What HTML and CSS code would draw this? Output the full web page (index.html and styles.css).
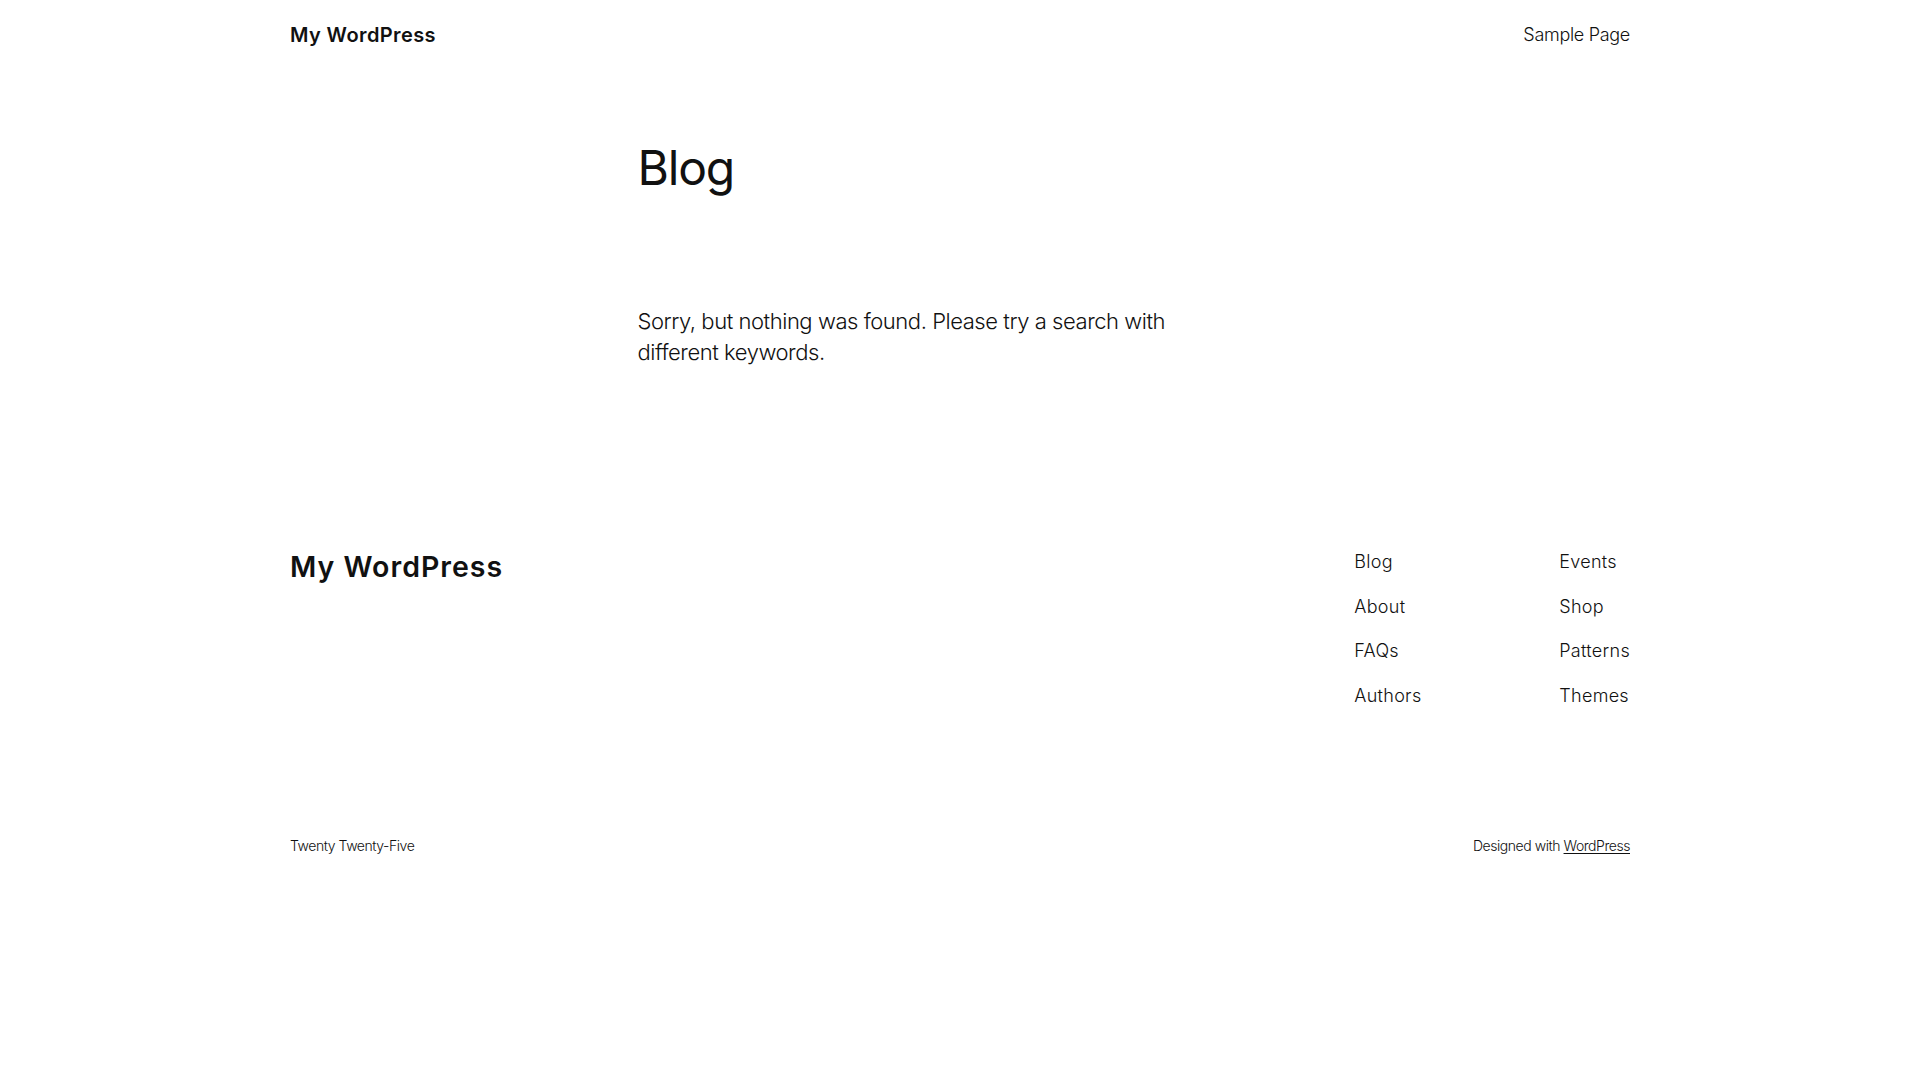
FILE: index.html
```html
<!DOCTYPE html>
<html lang="en">
<head>
<meta charset="utf-8">
<title>Blog – My WordPress</title>
<link rel="stylesheet" href="styles.css">
</head>
<body>
<div class="site">
  <header class="site-header wide">
    <a class="site-title" href="#">My WordPress</a>
    <nav class="header-nav"><a href="#">Sample Page</a></nav>
  </header>

  <main class="content">
    <h1 class="page-title">Blog</h1>
    <p class="not-found">Sorry, but nothing was found. Please try a search with different keywords.</p>
  </main>

  <footer class="site-footer wide">
    <div class="footer-top">
      <a class="footer-title" href="#">My WordPress</a>
      <div class="footer-navs">
        <ul class="footer-nav">
          <li><a href="#">Blog</a></li>
          <li><a href="#">About</a></li>
          <li><a href="#">FAQs</a></li>
          <li><a href="#">Authors</a></li>
        </ul>
        <ul class="footer-nav">
          <li><a href="#">Events</a></li>
          <li><a href="#">Shop</a></li>
          <li><a href="#">Patterns</a></li>
          <li><a href="#">Themes</a></li>
        </ul>
      </div>
    </div>
    <div class="footer-bottom">
      <span>Twenty Twenty-Five</span>
      <span>Designed with <a class="credit" href="#">WordPress</a></span>
    </div>
  </footer>
</div>
</body>
</html>
```

FILE: styles.css
```css
html, body {
  margin: 0;
  padding: 0;
  background: #ffffff;
}

body {
  font-family: Inter, "Liberation Sans", sans-serif;
  font-weight: 300;
  color: #111111;
  letter-spacing: -0.1px;
}

a {
  color: inherit;
  text-decoration: none;
}

.wide {
  width: 1340px;
  margin: 0 auto;
}

.site-header {
  display: flex;
  justify-content: space-between;
  align-items: center;
  padding-top: 21px;
  height: 28px;
}

.site-title {
  font-size: 20px;
  line-height: 28px;
  font-weight: 600;
  letter-spacing: 0.4px;
}

.header-nav a {
  font-size: 18px;
  line-height: 28px;
  letter-spacing: -0.3px;
}

.content {
  width: 645px;
  margin: 0 auto;
}

.page-title {
  margin: 92px 0 0;
  font-size: 48px;
  line-height: 54px;
  font-weight: 400;
  letter-spacing: -1.2px;
}

.not-found {
  margin: 111px 0 0;
  max-width: 580px;
  font-size: 22px;
  line-height: 30.8px;
  letter-spacing: -0.45px;
}

.site-footer {
  margin-top: 182px;
}

.footer-top {
  display: flex;
  justify-content: space-between;
  align-items: flex-start;
}

.footer-title {
  font-size: 28.5px;
  line-height: 34px;
  font-weight: 600;
  letter-spacing: 1px;
}

.footer-navs {
  display: flex;
  margin-top: -0.5px;
}

.footer-nav {
  list-style: none;
  margin: 0;
  padding: 0;
  display: flex;
  flex-direction: column;
  gap: 19.5px;
  width: 205px;
}

.footer-nav:last-child {
  width: auto;
}

.footer-nav li {
  font-size: 18px;
  line-height: 25px;
  letter-spacing: 0.3px;
}

.footer-bottom {
  display: flex;
  justify-content: space-between;
  margin-top: 128px;
  font-size: 14px;
  line-height: 20px;
  letter-spacing: -0.45px;
}

.credit {
  text-decoration: underline;
  text-underline-offset: 2px;
}
```
